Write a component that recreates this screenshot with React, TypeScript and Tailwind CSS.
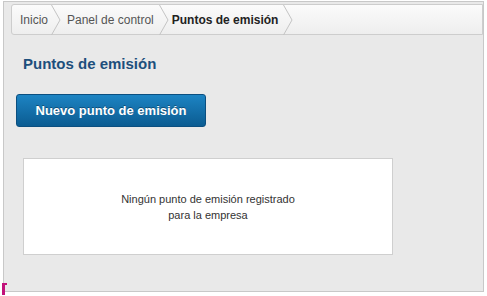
import React from "react";

function Chevron() {
  return (
    <svg width="10" height="30" viewBox="0 0 10 30" className="shrink-0 block">
      <polyline points="0.5,0 9,15 0.5,30" fill="none" stroke="#c4c4c4" strokeWidth="1" />
    </svg>
  );
}

export default function App() {
  return (
    <div className="w-[487px] h-[296px] bg-white relative" style={{ fontFamily: '"Liberation Sans", Arial, sans-serif' }}>
      <div className="ml-[3px] pt-[1px]">
        <div className="w-[481px] h-[291px] border border-[#c8c8c8] bg-[#e9e9e9] flex flex-col">
          <div className="ml-[7px] mt-[2px] h-[31px] border border-[#cdcdcd] rounded-l-[3px] bg-gradient-to-b from-[#fbfbfb] to-[#eeeeee] flex items-center text-[12px]">
            <span className="pl-[8px] pr-[3px] text-[#555]">Inicio</span>
            <Chevron />
            <span className="pl-[6px] pr-[5px] text-[#555]">Panel de control</span>
            <Chevron />
            <span className="pl-[3px] pr-[5px] font-bold text-[#222]">Puntos de emisión</span>
            <Chevron />
          </div>
          <div className="pl-[19px] pt-[20px] text-[15px] font-bold text-[#1d4f7c] leading-[18px]">Puntos de emisión</div>
          <div className="pl-[12px] pt-[21px]">
            <button className="w-[190px] h-[33px] rounded-[3px] border border-[#0b4f80] bg-gradient-to-b from-[#1d84c3] to-[#0b5c92] text-white text-[13px] font-bold [text-shadow:0_-1px_0_rgba(0,0,0,0.35)]">
              Nuevo punto de emisión
            </button>
          </div>
          <div className="ml-[19px] mt-[31px] w-[370px] h-[97px] bg-white border border-[#cfcfcf] flex flex-col items-center justify-center text-[11px] text-[#333] leading-[16px] text-center">
            <div>Ningún punto de emisión registrado</div>
            <div>para la empresa</div>
          </div>
        </div>
      </div>
      <div className="absolute left-[2px] top-[283px] w-[3px] h-[12px] bg-[#c2127a]" />
      <div className="absolute left-[2px] top-[283px] w-[5px] h-[2px] bg-[#c2127a]" />
    </div>
  );
}
